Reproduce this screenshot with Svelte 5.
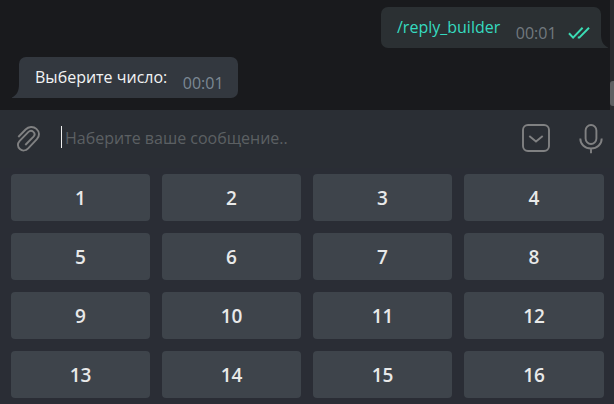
<script>
  const numbers = Array.from({ length: 16 }, (_, i) => i + 1);
</script>

<div class="app">
  <section class="chat">
    <div class="history">
      <div class="bubble out">
        <span class="text command">/reply_builder</span>
        <span class="time">00:01</span>
        <svg class="checks" width="23" height="14" viewBox="0 0 23 14">
          <path d="M1 7.3 L5.1 11.6 L14.6 1.8 M9.8 11.6 L11.3 11.6 L21 1.8" />
        </svg>
        <svg class="tail" width="13" height="14" viewBox="0 0 13 14">
          <path d="M0 0H6C6 7 8 11 13 13.4V14H0Z" />
        </svg>
      </div>
      <div class="bubble in">
        <span class="text">Выберите число:</span>
        <span class="time">00:01</span>
        <svg class="tail" width="13" height="14" viewBox="0 0 13 14">
          <path d="M13 0H7C7 7 5 11 0 13.4V14H13Z" />
        </svg>
      </div>
    </div>
    <div class="scrollbar"><div class="thumb"></div></div>
  </section>

  <section class="composer">
    <svg class="icon clip" width="26" height="30" viewBox="0 -0.8 26 30">
      <path d="M2.3 12.2 L9.6 4.7 C12.6 1.6 17.2 1.2 20.4 4.1 C23.7 7.1 23.8 11.2 20.9 14.3 L12.2 23.5 C9.7 26.1 6.3 26.3 3.9 24.2 C1.3 21.9 1.3 18.6 3.7 16 L12.2 7.4 C13.7 5.9 15.9 5.8 17.4 7.1 C18.9 8.5 18.9 10.4 17.5 11.9 L9.3 20.2" />
    </svg>
    <div class="field"><span>Наберите ваше сообщение..</span></div>
    <svg class="icon toggle" width="28" height="28" viewBox="0 0 28 28">
      <rect x="1" y="1" width="26" height="26" rx="5" />
      <path d="M7.3 12 L14 17.5 L20.7 12" />
    </svg>
    <svg class="icon mic" width="24" height="30" viewBox="0 0 24 30">
      <rect x="6.6" y="1" width="10.8" height="19" rx="5.4" />
      <path d="M1.3 14.5 C1.3 20.5 6 24.5 12 24.5 C18 24.5 22.7 20.5 22.7 14.5 M12 24.5 V29.2" />
    </svg>
  </section>

  <section class="keyboard">
    {#each numbers as n}
      <button>{n}</button>
    {/each}
  </section>
</div>

<style>
  :global(body) {
    margin: 0;
    overflow: hidden;
    background: #2a2d35;
  }
  .app {
    width: 614px;
    height: 404px;
    overflow: hidden;
    display: flex;
    flex-direction: column;
    background: #2a2d35;
    font-family: "Open Sans", "Noto Sans", sans-serif;
  }
  .chat {
    height: 110px;
    flex: none;
    display: flex;
    background: #191a1d;
  }
  .history {
    flex: 1;
    display: flex;
    flex-direction: column;
    gap: 9px;
    padding: 7px 9px 0 19px;
  }
  .bubble {
    position: relative;
    box-sizing: border-box;
    height: 41px;
    display: flex;
    align-items: flex-start;
    padding: 9px 0 0 16px;
    border-radius: 7px;
    font-size: 16px;
    line-height: 22px;
    white-space: nowrap;
  }
  .out {
    align-self: flex-end;
    width: 220px;
    background: #2b3033;
    border-bottom-right-radius: 0;
  }
  .in {
    align-self: flex-start;
    width: 219px;
    background: #33383f;
    border-bottom-left-radius: 0;
  }
  .text {
    color: #f2f3f4;
  }
  .command {
    color: #36dbc0;
  }
  .time {
    margin: 6px 0 0 15.5px;
    color: #72797f;
  }
  .in .time {
    color: #7c8894;
  }
  .checks {
    margin: 10px 0 0 11.5px;
    fill: none;
    stroke: #3bdcb4;
    stroke-width: 2;
  }
  .tail {
    position: absolute;
    bottom: 0;
  }
  .out .tail {
    right: -7px;
    fill: #2b3033;
  }
  .in .tail {
    left: -7px;
    fill: #33383f;
  }
  .scrollbar {
    width: 4px;
    display: flex;
    align-items: flex-start;
    background: #2b2c2f;
  }
  .thumb {
    width: 4px;
    height: 25px;
    margin-top: 81px;
    border-radius: 3px 0 0 3px;
    background: #5f6062;
  }
  .composer {
    height: 58px;
    flex: none;
    box-sizing: border-box;
    display: flex;
    align-items: flex-start;
    padding: 14px 11px 0 16px;
    background: #2a2e34;
  }
  .icon {
    flex: none;
    fill: none;
    stroke: #808182;
    stroke-width: 1.9;
  }
  .field {
    flex: 1;
    height: 22px;
    margin: 2px 0 0 19px;
    padding-left: 3px;
    border-left: 1px solid #f0f0f0;
    color: #5c6063;
    font-size: 16px;
    line-height: 25px;
    white-space: nowrap;
  }
  .mic {
    margin-left: 29px;
  }
  .keyboard {
    display: grid;
    grid-template-columns: 139px 139px 139px 140px;
    grid-auto-rows: 47px;
    gap: 12px;
    padding: 6px 10px 6px 11px;
  }
  button {
    box-sizing: border-box;
    padding: 2px 0 0;
    border: 0;
    border-radius: 4px;
    background: #3e444b;
    color: #e8e9e9;
    font: 600 19px/45px "Open Sans", "Noto Sans", sans-serif;
  }
</style>
